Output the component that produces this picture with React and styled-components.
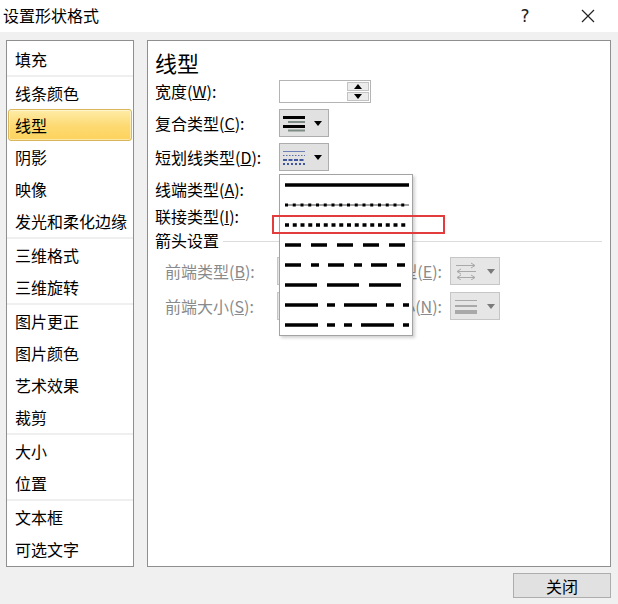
import React from 'react';
import styled, { createGlobalStyle, css } from 'styled-components';

const GlobalStyle = createGlobalStyle`
  html, body {
    margin: 0;
    padding: 0;
  }
  body {
    font-family: "Noto Sans CJK SC", "Noto Sans", sans-serif;
    font-size: 16px;
    color: #000;
    background: #f0f0f0;
  }
`;

const Window = styled.div`
  width: 618px;
  height: 604px;
  display: flex;
  flex-direction: column;
  background: #f0f0f0;
  overflow: hidden;
`;

const TitleBar = styled.div`
  height: 32px;
  flex: none;
  display: flex;
  align-items: center;
  padding: 0 8px 0 3px;
  background: #fff;
`;

const Title = styled.div`
  flex: 1;
  font-size: 16px;
  line-height: 1;
  margin-top: -2px;
`;

const TitleButton = styled.div`
  width: ${p => p.$w}px;
  height: 32px;
  margin-right: ${p => p.$mr || 0}px;
  display: flex;
  align-items: center;
  justify-content: center;
  font-family: "DejaVu Sans", sans-serif;
  font-size: 17px;
  color: #222;
`;

const Body = styled.div`
  flex: 1;
  display: flex;
  flex-direction: column;
  padding: 8px 7px 0 6px;
`;

const Panels = styled.div`
  height: 527px;
  display: flex;
  gap: 13px;
`;

const Nav = styled.div`
  width: 128px;
  box-sizing: border-box;
  border: 1px solid #8f8f8f;
  background: #fff;
  padding-top: 2px;
`;

const NavItem = styled.div`
  height: 32px;
  box-sizing: border-box;
  margin: 0 1px;
  padding-left: 6px;
  display: flex;
  align-items: center;
  border: 1px solid transparent;
  border-radius: 3px;
  line-height: 1;
  white-space: nowrap;

  ${p => p.$active && css`
    background: linear-gradient(#feeca8, #fdd970 55%, #fcd35e);
    border-color: #d9b65c;
    box-shadow: inset 0 0 0 1px rgba(255, 255, 255, 0.45);
  `}
`;

const NavSep = styled.div`
  height: 2px;
  background: #efefef;
`;

const Content = styled.div`
  flex: 1;
  box-sizing: border-box;
  border: 1px solid #8f8f8f;
  background: #fff;
  padding: 10px 4px 0 7px;
`;

const Heading = styled.div`
  font-size: 22px;
  line-height: 22px;
  height: 22px;
`;

const Row = styled.div`
  display: flex;
  align-items: center;
  height: ${p => p.$h || 28}px;
  margin-top: ${p => p.$mt || 0}px;
  padding-left: ${p => p.$indent || 0}px;
`;

const Label = styled.div`
  flex: none;
  width: ${p => p.$w || 124}px;
  box-sizing: border-box;
  line-height: 1;
  white-space: nowrap;
  color: ${p => (p.$disabled ? '#8a8a8a' : '#000')};
  text-align: ${p => (p.$right ? 'right' : 'left')};
  padding-right: ${p => (p.$right ? 8 : 0)}px;
`;

const Key = styled.span`
  text-decoration: underline;
  text-underline-offset: 1px;
`;

const SpinBox = styled.div`
  width: 92px;
  height: 23px;
  box-sizing: border-box;
  border: 1px solid #b4b4b4;
  background: #fff;
  display: flex;
  justify-content: flex-end;
  padding: 1px;
`;

const SpinButtons = styled.div`
  width: 22px;
  display: flex;
  flex-direction: column;
  gap: 1px;
`;

const SpinButton = styled.div`
  flex: 1;
  border: 1px solid #c3c3c3;
  background: #ececec;
  display: flex;
  align-items: center;
  justify-content: center;
`;

const Tri = styled.span`
  width: 0;
  height: 0;
  border-left: 4px solid transparent;
  border-right: 4px solid transparent;
  ${p => (p.$up
    ? css`border-bottom: 5px solid ${p.$color || '#000'};`
    : css`border-top: 5px solid ${p.$color || '#000'};`)}
`;

const DropWrap = styled.div`
  position: relative;
  flex: none;
`;

const Dropdown = styled.div`
  width: 50px;
  height: 28px;
  box-sizing: border-box;
  border: 1px solid ${p => (p.$disabled ? '#c6c6c6' : '#adadad')};
  background: ${p => (p.$disabled ? '#e6e6e6' : '#e1e1e1')};
  display: flex;
  align-items: center;
  padding-left: 3px;
  gap: 9px;
`;

const SectionTitle = styled.div`
  display: flex;
  align-items: center;
  height: 22px;
  line-height: 1;
  padding-right: 4px;
`;

const Rule = styled.div`
  flex: 1;
  height: 1px;
  margin-left: 4px;
  margin-top: 2px;
  background: #dcdcdc;
`;

const Popup = styled.div`
  position: absolute;
  left: 0;
  top: 31px;
  z-index: 5;
  width: 134px;
  box-sizing: border-box;
  border: 1px solid #a3a3a3;
  background: #fff;
  box-shadow: 2px 2px 3px rgba(0, 0, 0, 0.18);
`;

const PopupItem = styled.div`
  height: 20px;
  padding-left: 5px;
  display: flex;
  align-items: center;
`;

const Highlight = styled.div`
  position: absolute;
  left: -8px;
  top: 40px;
  width: 173px;
  height: 19px;
  box-sizing: border-box;
  border: 2px solid #e23c3c;
  pointer-events: none;
`;

const Footer = styled.div`
  display: flex;
  justify-content: flex-end;
  margin-top: 6px;
`;

const Button = styled.div`
  width: 98px;
  height: 25px;
  box-sizing: border-box;
  border: 1px solid #adadad;
  background: #e1e1e1;
  display: flex;
  align-items: center;
  justify-content: center;
  line-height: 1;
`;

const navGroups = [
  ['填充'],
  ['线条颜色', '线型', '阴影', '映像', '发光和柔化边缘'],
  ['三维格式', '三维旋转'],
  ['图片更正', '图片颜色', '艺术效果', '裁剪'],
  ['大小', '位置'],
  ['文本框', '可选文字'],
];

const dashes = [
  { name: 'solid' },
  { name: 'round', dash: '3 4.75', thin: true },
  { name: 'square', dash: '4 3.75' },
  { name: 'dash', dash: '16 10' },
  { name: 'dashDot', dash: '16 10 8 9' },
  { name: 'long', dash: '32 10' },
  { name: 'longDot', dash: '33 9 8 9' },
  { name: 'longDotDot', dash: '33 9 8 9 8 9' },
];

const CloseIcon = () => (
  <svg width="14" height="14" viewBox="0 0 14 14">
    <path d="M1 1L13 13M13 1L1 13" stroke="#222" strokeWidth="1.2" />
  </svg>
);

const CompoundIcon = () => (
  <svg width="22" height="18" viewBox="0 0 22 18">
    <rect x="0" y="2" width="22" height="3" fill="#000" />
    <rect x="5" y="7" width="17" height="2" fill="#7d8c84" />
    <rect x="0" y="11" width="22" height="3" fill="#000" />
    <rect x="5" y="15.5" width="17" height="2" fill="#7d8c84" />
  </svg>
);

const DashIcon = () => (
  <svg width="22" height="18" viewBox="0 0 22 18">
    <line x1="0" y1="3.5" x2="22" y2="3.5" stroke="#6f7fb8" strokeWidth="1" />
    <line x1="0" y1="7.5" x2="22" y2="7.5" stroke="#5c6ea8" strokeWidth="1" strokeDasharray="1.5 1.5" />
    <line x1="0" y1="12" x2="22" y2="12" stroke="#3f55a0" strokeWidth="2" strokeDasharray="4 1.5" />
    <line x1="0" y1="16" x2="22" y2="16" stroke="#3f55a0" strokeWidth="2" strokeDasharray="2 2" />
  </svg>
);

const ArrowTypeIcon = () => (
  <svg width="24" height="18" viewBox="0 0 24 18" stroke="#a9a9a9" fill="none" strokeWidth="1">
    <path d="M2 3.5H21M17 1L21 3.5L17 6" />
    <path d="M3 9.5H22M7 7L3 9.5L7 12" />
    <path d="M3 15.5H21M7 13L3 15.5L7 18M17 13L21 15.5L17 18" />
  </svg>
);

const ArrowSizeIcon = () => (
  <svg width="24" height="18" viewBox="0 0 24 18">
    <rect x="1" y="3" width="22" height="1" fill="#a9a9a9" />
    <rect x="1" y="8" width="22" height="2" fill="#a9a9a9" />
    <rect x="1" y="13" width="22" height="4" fill="#a9a9a9" />
  </svg>
);

const DashLine = ({ dash, thin }) => (
  <svg width="124" height="8" viewBox="0 0 124 8">
    {thin && <line x1="0" y1="4" x2="124" y2="4" stroke="#444" strokeWidth="1" />}
    <line
      x1="0"
      y1="4"
      x2="124"
      y2="4"
      stroke="#000"
      strokeWidth={thin ? 3 : 3.5}
      strokeDasharray={dash}
    />
  </svg>
);

const App = () => (
  <Window>
    <GlobalStyle />
    <TitleBar>
      <Title>设置形状格式</Title>
      <TitleButton $w={40} $mr={21}>?</TitleButton>
      <TitleButton $w={44}><CloseIcon /></TitleButton>
    </TitleBar>

    <Body>
      <Panels>
        <Nav>
          {navGroups.map((group, i) => (
            <React.Fragment key={group[0]}>
              {i > 0 && <NavSep />}
              {group.map(item => (
                <NavItem key={item} $active={item === '线型'}>{item}</NavItem>
              ))}
            </React.Fragment>
          ))}
        </Nav>

        <Content>
          <Heading>线型</Heading>

          <Row $mt={4}>
            <Label>宽度(<Key>W</Key>):</Label>
            <SpinBox>
              <SpinButtons>
                <SpinButton><Tri $up /></SpinButton>
                <SpinButton><Tri /></SpinButton>
              </SpinButtons>
            </SpinBox>
          </Row>

          <Row $mt={4}>
            <Label>复合类型(<Key>C</Key>):</Label>
            <Dropdown>
              <CompoundIcon />
              <Tri />
            </Dropdown>
          </Row>

          <Row $mt={6}>
            <Label>短划线类型(<Key>D</Key>):</Label>
            <DropWrap>
              <Dropdown>
                <DashIcon />
                <Tri />
              </Dropdown>
              <Popup>
                {dashes.map(d => (
                  <PopupItem key={d.name}>
                    <DashLine dash={d.dash} thin={d.thin} />
                  </PopupItem>
                ))}
                <Highlight />
              </Popup>
            </DropWrap>
          </Row>

          <Row $mt={4}>
            <Label>线端类型(<Key>A</Key>):</Label>
          </Row>

          <Row $h={26}>
            <Label>联接类型(<Key>I</Key>):</Label>
          </Row>

          <SectionTitle>
            箭头设置
            <Rule />
          </SectionTitle>

          <Row $mt={6} $indent={10}>
            <Label $w={112} $disabled>前端类型(<Key>B</Key>):</Label>
            <Dropdown $disabled>
              <ArrowTypeIcon />
              <Tri $color="#7a7a7a" />
            </Dropdown>
            <Label $w={123} $right $disabled>末端类型(<Key>E</Key>):</Label>
            <Dropdown $disabled>
              <ArrowTypeIcon />
              <Tri $color="#7a7a7a" />
            </Dropdown>
          </Row>

          <Row $mt={7} $indent={10}>
            <Label $w={112} $disabled>前端大小(<Key>S</Key>):</Label>
            <Dropdown $disabled>
              <ArrowSizeIcon />
              <Tri $color="#7a7a7a" />
            </Dropdown>
            <Label $w={123} $right $disabled>末端大小(<Key>N</Key>):</Label>
            <Dropdown $disabled>
              <ArrowSizeIcon />
              <Tri $color="#7a7a7a" />
            </Dropdown>
          </Row>
        </Content>
      </Panels>

      <Footer>
        <Button>关闭</Button>
      </Footer>
    </Body>
  </Window>
);

export default App;
